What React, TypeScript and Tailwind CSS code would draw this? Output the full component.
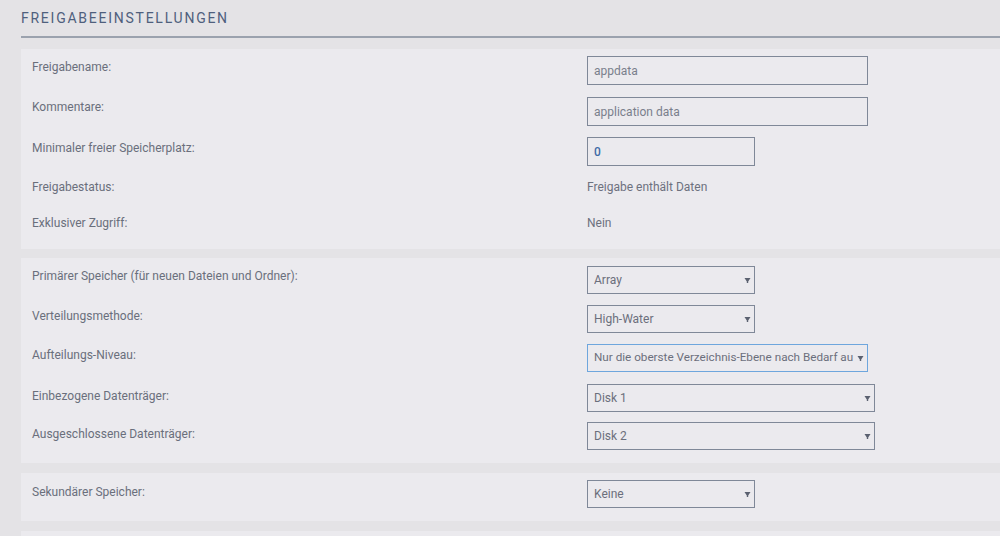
import React from "react";

function Arrow() {
  return (
    <svg width="7" height="7" viewBox="0 0 7 7" className="shrink-0">
      <path d="M0.5 1 H6.5 L4.2 4.5 V6 H2.8 V4.5 Z" fill="#5b6170" />
    </svg>
  );
}

function TextInput({ value, width, blue }: { value: string; width: string; blue?: boolean }) {
  return (
    <div
      className={`${width} h-[29px] border border-[#7f8898] flex items-center px-[6px] text-[12px] ${
        blue ? "text-[#3f6aa6] font-medium" : "text-[#7a7f8c]"
      }`}
    >
      {value}
    </div>
  );
}

function Select({ value, width, focus }: { value: string; width: string; focus?: boolean }) {
  return (
    <div
      className={`${width} h-[28px] border flex items-center pl-[6px] pr-[3px] text-[#6b6f7c] ${
        focus ? "border-[#6ea6dd] text-[11.7px]" : "border-[#7f8898] text-[12px]"
      }`}
    >
      <span className="flex-1 overflow-hidden whitespace-nowrap">{value}</span>
      <Arrow />
    </div>
  );
}

function Row({
  label,
  pt,
  h,
  children,
}: {
  label: string;
  pt: string;
  h: string;
  children: React.ReactNode;
}) {
  return (
    <div className={`flex items-start ${h}`}>
      <div className={`w-[566px] pl-[11px] ${pt} leading-[16px] text-[12px] text-[#6a6f7c]`}>{label}</div>
      <div>{children}</div>
    </div>
  );
}

export default function App() {
  return (
    <div className="w-[1000px] h-[536px] overflow-hidden bg-[#e4e3e6] font-['Roboto',sans-serif] pl-[21px]">
      <div className="h-[38px] flex items-center border-b-2 border-[#9ba2ae]">
        <h1 className="text-[14px] tracking-[1.75px] text-[#4f5f7d] mt-[1px]">FREIGABEEINSTELLUNGEN</h1>
      </div>

      {/* Freigabe */}
      <div className="mt-[11px] bg-[#ebeaee] pt-[7px]">
        <Row label="Freigabename:" pt="pt-[3px]" h="h-[41px]">
          <TextInput value="appdata" width="w-[281px]" />
        </Row>
        <Row label="Kommentare:" pt="pt-[2px]" h="h-[40px]">
          <TextInput value="application data" width="w-[281px]" />
        </Row>
        <Row label="Minimaler freier Speicherplatz:" pt="pt-[3px]" h="h-[40px]">
          <TextInput value="0" width="w-[168px]" blue />
        </Row>
        <Row label="Freigabestatus:" pt="pt-[2px]" h="h-[36px]">
          <div className="pt-[2px] leading-[16px] text-[12px] text-[#6d717e]">Freigabe enthält Daten</div>
        </Row>
        <Row label="Exklusiver Zugriff:" pt="pt-[2px]" h="h-[36px]">
          <div className="pt-[2px] leading-[16px] text-[12px] text-[#6d717e]">Nein</div>
        </Row>
      </div>

      {/* Speicher */}
      <div className="mt-[9px] bg-[#ebeaee] pt-[8px]">
        <Row label="Primärer Speicher (für neuen Dateien und Ordner):" pt="pt-[2px]" h="h-[39px]">
          <Select value="Array" width="w-[168px]" />
        </Row>
        <Row label="Verteilungsmethode:" pt="pt-[3px]" h="h-[39px]">
          <Select value="High-Water" width="w-[168px]" />
        </Row>
        <Row label="Aufteilungs-Niveau:" pt="pt-[3px]" h="h-[40px]">
          <Select value="Nur die oberste Verzeichnis-Ebene nach Bedarf au" width="w-[281px]" focus />
        </Row>
        <Row label="Einbezogene Datenträger:" pt="pt-[4px]" h="h-[38px]">
          <Select value="Disk 1" width="w-[288px]" />
        </Row>
        <Row label="Ausgeschlossene Datenträger:" pt="pt-[4px]" h="h-[41px]">
          <Select value="Disk 2" width="w-[288px]" />
        </Row>
      </div>

      <div className="mt-[10px] bg-[#ebeaee] pt-[7px]">
        <Row label="Sekundärer Speicher:" pt="pt-[4px]" h="h-[41px]">
          <Select value="Keine" width="w-[168px]" />
        </Row>
      </div>

      <div className="mt-[10px] bg-[#ebeaee] h-[40px]" />
    </div>
  );
}
